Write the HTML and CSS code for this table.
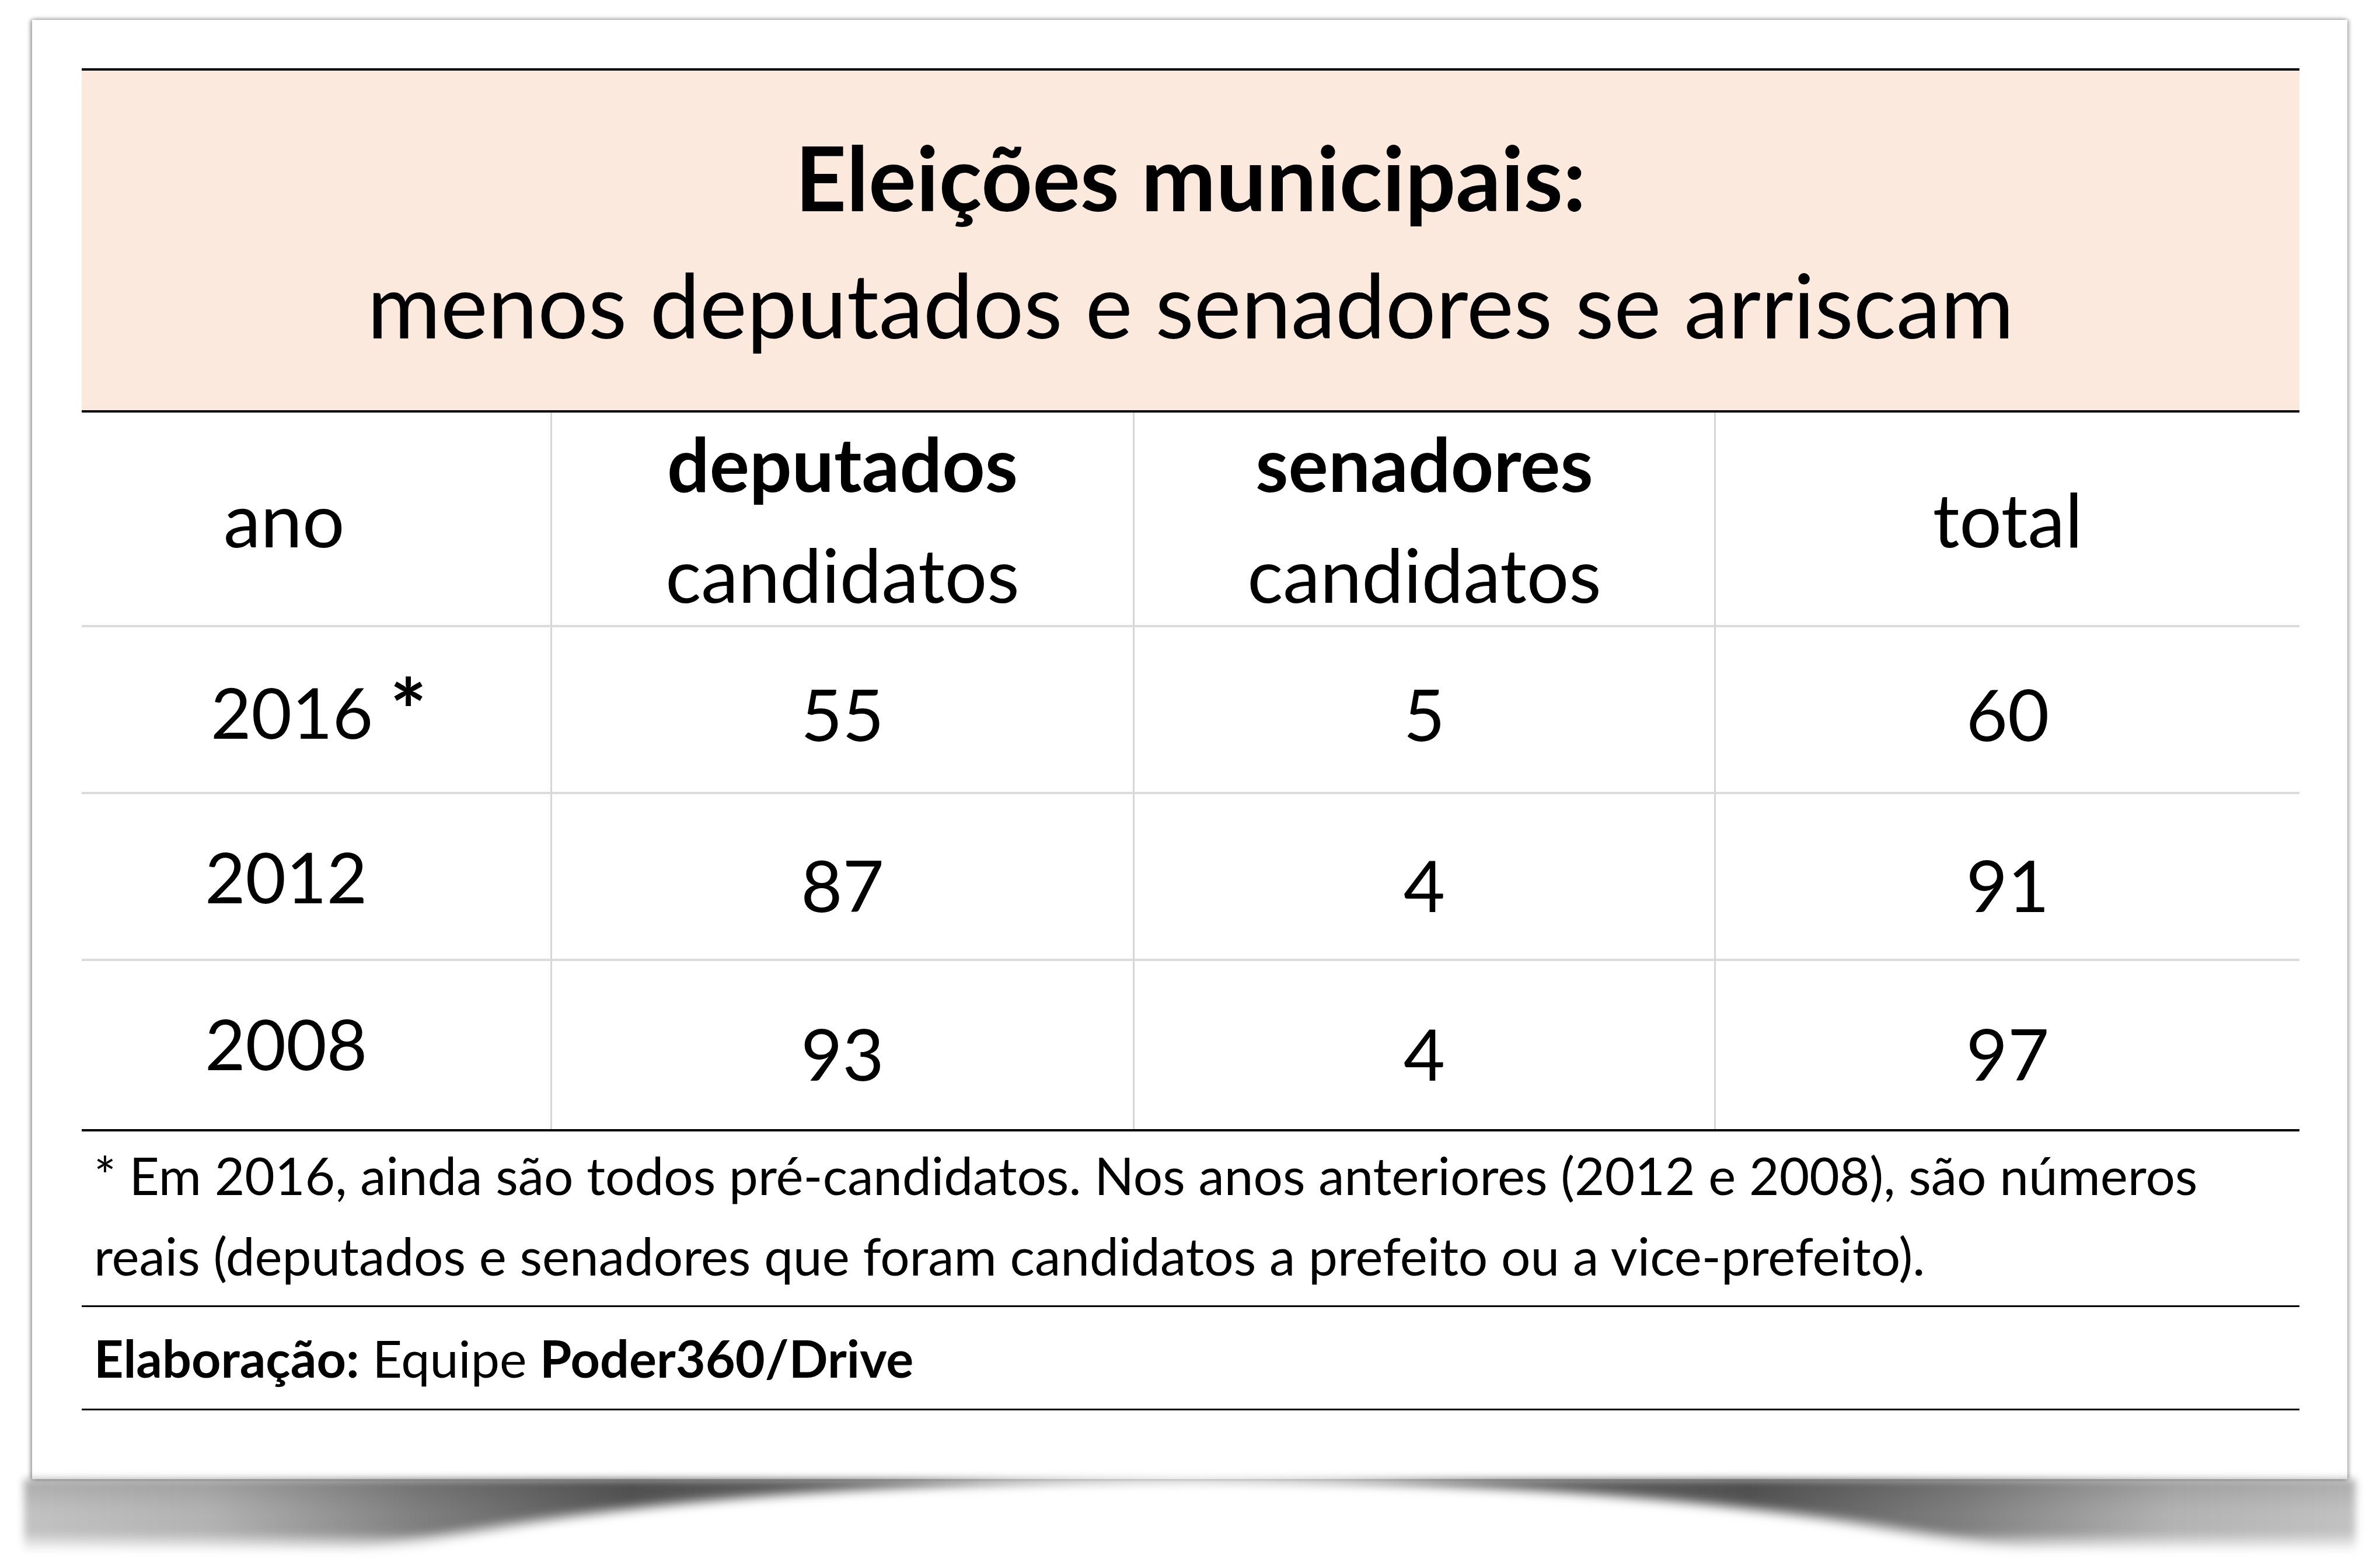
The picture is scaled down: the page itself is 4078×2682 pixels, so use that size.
FILE: index.html
```html
<!DOCTYPE html>
<html lang="pt">
<head>
<meta charset="utf-8">
<title>Eleições municipais</title>
<link rel="stylesheet" href="styles.css">
</head>
<body>
<div class="card">
  <div class="sheet">
    <header class="banner">
      <div class="title">Eleições municipais:</div>
      <div class="subtitle">menos deputados e senadores se arriscam</div>
    </header>
    <div class="grid">
      <div class="cell head year ano">ano</div>
      <div class="cell head"><span class="b">deputados</span><span>candidatos</span></div>
      <div class="cell head"><span class="b">senadores</span><span>candidatos</span></div>
      <div class="cell head last">total</div>

      <div class="cell num year y2016">2016 <span class="ast">*</span></div>
      <div class="cell num">55</div>
      <div class="cell num">5</div>
      <div class="cell num last">60</div>

      <div class="cell num year">2012</div>
      <div class="cell num low">87</div>
      <div class="cell num low">4</div>
      <div class="cell num low last">91</div>

      <div class="cell num year bottom">2008</div>
      <div class="cell num low bottom">93</div>
      <div class="cell num low bottom">4</div>
      <div class="cell num low bottom last">97</div>
    </div>
    <div class="note">* Em 2016, ainda são todos pré-candidatos. Nos anos anteriores (2012 e 2008), são números<br>reais (deputados e senadores que foram candidatos a prefeito ou a vice-prefeito).</div>
    <div class="credit"><b>Elaboração:</b> Equipe <b>Poder360/Drive</b></div>
  </div>
</div>
</body>
</html>
```

FILE: styles.css
```css
html {
  margin: 0;
  padding: 0;
  background: #ffffff;
}
body {
  margin: 0;
  padding: 0;
  width: 4078px;
  height: 2682px;
  font-family: Lato, "Open Sans", sans-serif;
  color: #000;
  overflow: hidden;
}
.card {
  position: relative;
  margin: 34px 0 0 55px;
  width: 3967px;
  height: 2501px;
  background: #fff;
  box-shadow: 0 0 10px rgba(0,0,0,0.22), -3px 0 6px rgba(0,0,0,0.28), 3px 0 6px rgba(0,0,0,0.2);
  box-sizing: border-box;
  padding: 83px 82px 0 85px;
}
.card::after {
  content: "";
  position: absolute;
  top: 100%;
  left: -14px;
  right: -14px;
  height: 125px;
  background-image:
    radial-gradient(ellipse 42% 205% at 50% 200%, #fff 0%, #fff 93%, rgba(255,255,255,0) 100%),
    linear-gradient(to bottom, rgba(255,255,255,0) 0%, rgba(255,255,255,0) 72%, #fff 100%),
    linear-gradient(to bottom, rgba(0,0,0,0.12) 0%, rgba(0,0,0,0) 45%),
    linear-gradient(to right, rgba(0,0,0,0.24) 0%, rgba(0,0,0,0.3) 8%, rgba(0,0,0,0.5) 17%, rgba(0,0,0,0.66) 26%, rgba(0,0,0,0.55) 38%, rgba(0,0,0,0.35) 50%, rgba(0,0,0,0.55) 62%, rgba(0,0,0,0.66) 74%, rgba(0,0,0,0.5) 83%, rgba(0,0,0,0.3) 92%, rgba(0,0,0,0.24) 100%);
  filter: blur(7px);
}
.sheet {
  width: 3800px;
}
.banner {
  height: 582px;
  background: #fae9dc;
  border-top: 4px solid #000;
  border-bottom: 4px solid #000;
  box-sizing: content-box;
  display: flex;
  flex-direction: column;
  justify-content: center;
  align-items: center;
}
.title {
  font-weight: 700;
  font-size: 153px;
  line-height: 218px;
}
.subtitle {
  font-weight: 400;
  font-size: 153px;
  line-height: 218px;
}
.grid {
  display: grid;
  grid-template-columns: 806px 998px 996px 1000px;
  grid-template-rows: 368px 286px 286px 288px;
  border-bottom: 4px solid #000;
}
.cell {
  display: flex;
  flex-direction: column;
  align-items: center;
  justify-content: center;
  border-right: 3px solid #d6d6d6;
  border-bottom: 4px solid #dcdcdc;
  box-sizing: border-box;
}
.cell.last {
  border-right: none;
}
.cell.bottom {
  border-bottom: none;
}
.head {
  font-size: 128px;
  line-height: 190px;
}
.head .b {
  font-weight: 700;
}
.num {
  font-size: 123px;
  line-height: 160px;
  padding-top: 14px;
}
.num.low {
  padding-top: 28px;
}
.year {
  display: block;
  font-size: 120px;
  padding-left: 211px;
  padding-top: 0;
  line-height: 282px;
}
.year.ano {
  display: flex;
  align-items: flex-start;
  font-size: 128px;
  padding-left: 243px;
  padding-top: 0;
  line-height: 190px;
}
.year.y2016 {
  padding-left: 221px;
  padding-top: 4px;
}
.ast {
  display: inline-block;
  font-weight: 700;
  transform: scale(1.25) translateY(-4px);
  margin-left: 4px;
}
.note {
  font-size: 89px;
  line-height: 138px;
  padding: 6px 0 16px 21px;
  border-bottom: 3px solid #000;
}
.credit {
  font-size: 88px;
  line-height: 138px;
  padding: 18px 0 18px 21px;
  border-bottom: 3px solid #000;
}
.credit b {
  font-weight: 700;
}
```
